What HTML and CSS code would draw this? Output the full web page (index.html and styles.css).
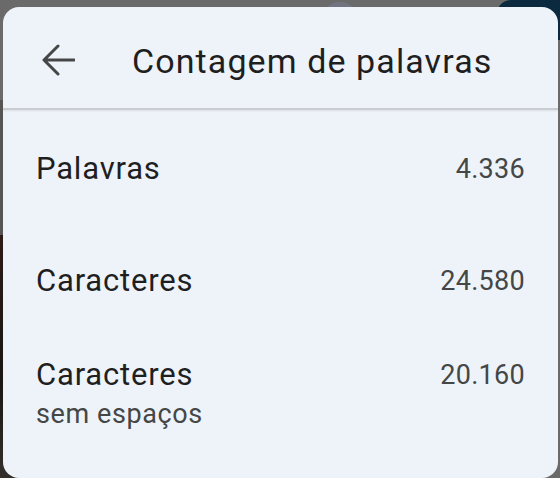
FILE: index.html
```html
<!DOCTYPE html>
<html lang="pt">
<head>
<meta charset="utf-8">
<link rel="stylesheet" href="styles.css">
</head>
<body>
<div class="backdrop">
  <div class="bg-left-mid"></div>
  <div class="bg-left-low"></div>
  <div class="bg-blob"></div>
  <div class="bg-navy"></div>
</div>
<main class="card">
  <header class="card-header">
    <button class="back" aria-label="Voltar">
      <svg width="34" height="34" viewBox="0 0 34 34"><path d="M33 17H3M17 3L3 17l14 14" fill="none" stroke="#444746" stroke-width="3" stroke-linecap="round" stroke-linejoin="round"/></svg>
    </button>
    <h1 class="title">Contagem de palavras</h1>
  </header>
  <section class="rows">
    <div class="row row-1">
      <div class="label">Palavras</div>
      <div class="value">4.336</div>
    </div>
    <div class="row row-2">
      <div class="label">Caracteres</div>
      <div class="value">24.580</div>
    </div>
    <div class="row row-3">
      <div class="label">Caracteres<span class="sub">sem espaços</span></div>
      <div class="value">20.160</div>
    </div>
  </section>
</main>
</body>
</html>
```
FILE: styles.css
```css
* { box-sizing: border-box; }
html, body { margin: 0; padding: 0; }
body {
  width: 560px;
  height: 478px;
  overflow: hidden;
  position: relative;
  background: #5c5c5c;
  font-family: "Roboto", "Liberation Sans", sans-serif;
}
.backdrop { position: absolute; inset: 0; background: #6a6a6a; }
.bg-left-mid { position: absolute; left: 0; top: 100px; width: 20px; height: 140px; background: #555; }
.bg-left-low { position: absolute; left: 0; top: 235px; width: 20px; height: 243px; background: linear-gradient(#2c1a16, #1a1613 60%, #33302c); }
.bg-blob { position: absolute; left: 322px; top: 2px; width: 36px; height: 36px; border-radius: 50%; background: #6f7480; }
.bg-navy { position: absolute; left: 497px; top: 0; width: 80px; height: 40px; border-radius: 14px 0 0 0; background: #0b2a3f; }

.card {
  position: absolute;
  left: 3px;
  top: 7px;
  width: 555px;
  height: 471px;
  background: #eef3fa;
  border-radius: 16px;
  overflow: hidden;
}
.card-header {
  height: 103px;
  display: flex;
  align-items: center;
  border-bottom: 2px solid #c9cccf;
  box-shadow: 0 1px 2px rgba(0,0,0,0.08);
}
.back {
  width: 34px;
  height: 34px;
  margin-left: 38px;
  margin-top: 4px;
  padding: 0;
  border: 0;
  background: none;
  display: flex;
}
.title {
  margin: 6px 0 0 57px;
  font-weight: 400;
  font-size: 34px;
  color: #1f1f1f;
  letter-spacing: 1.1px;
}
.rows { padding: 0 33px 0 33px; }
.row {
  display: flex;
  justify-content: space-between;
  align-items: flex-start;
}
.row-1 { padding-top: 39px; height: 151px; }
.row-2 { height: 94px; }
.label {
  font-size: 31px;
  color: #1f1f1f;
  line-height: 40px;
  letter-spacing: 0.8px;
  display: flex;
  flex-direction: column;
}
.sub {
  font-size: 27px;
  color: #444746;
  line-height: 38px;
  letter-spacing: 0.6px;
}
.value {
  font-size: 27px;
  color: #444746;
  line-height: 40px;
  letter-spacing: 0.3px;
}
```
